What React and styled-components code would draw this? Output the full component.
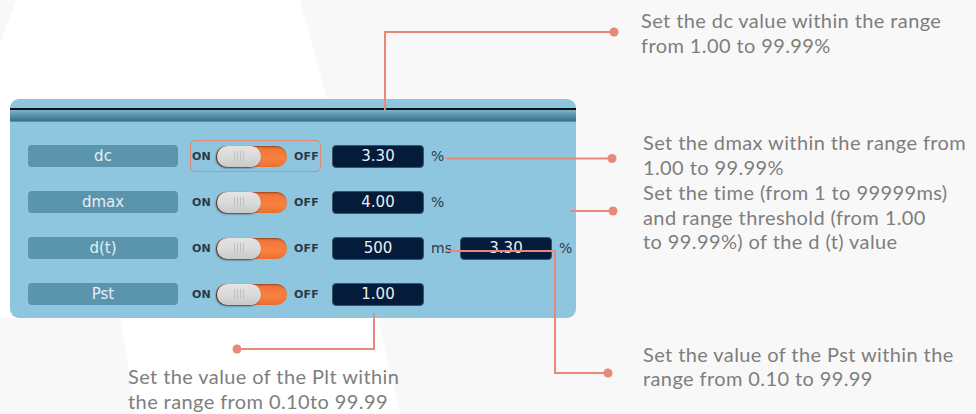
import React from 'react';
import styled, { createGlobalStyle } from 'styled-components';

const GlobalStyle = createGlobalStyle`
  html, body {
    margin: 0;
    padding: 0;
    background: #f8f8f8;
  }
  * {
    box-sizing: border-box;
  }
`;

const LINE = '#e8887a';

const Page = styled.div`
  position: relative;
  width: 976px;
  height: 414px;
  overflow: hidden;
  display: grid;
  grid-template-columns: 10px 566px 65px 1fr;
  font-family: 'DejaVu Sans', sans-serif;
`;

const Backdrop = styled.svg`
  position: absolute;
  inset: 0;
  z-index: 0;
`;

const Leaders = styled.svg`
  position: absolute;
  inset: 0;
  z-index: 5;
  pointer-events: none;
`;

const LeftColumn = styled.div`
  grid-column: 2;
  position: relative;
  z-index: 1;
  padding-top: 99px;
`;

const NotesColumn = styled.div`
  grid-column: 4;
  position: relative;
  z-index: 1;
  display: flex;
  flex-direction: column;
`;

const Note = styled.p`
  margin: ${({ top }) => `${top}px`} 0 0 ${({ left }) => `${left || 0}px`};
  font-family: Lato, 'Open Sans', sans-serif;
  font-size: 20px;
  font-weight: 400;
  letter-spacing: 0.4px;
  line-height: 24.5px;
  color: #7e7e7e;
  white-space: pre-line;
`;

const Panel = styled.div`
  width: 566px;
  height: 219px;
  background: #8dc6de;
  border-radius: 9px;
  padding-top: 9px;
  overflow: hidden;
`;

const HeaderRule = styled.div`
  height: 2px;
  background: #0b0f12;
`;

const HeaderBand = styled.div`
  height: 12px;
  background: linear-gradient(
    to bottom,
    #7db4ca 0%,
    #5f98b1 35%,
    #4a8199 70%,
    #3c7189 90%,
    #6ea9c1 100%
  );
`;

const Rows = styled.div`
  display: flex;
  flex-direction: column;
  gap: 14px;
  padding: 18px 0 0 18px;
`;

const Row = styled.div`
  display: flex;
  align-items: center;
  height: 32px;
`;

const Label = styled.div`
  width: 150px;
  height: 22px;
  border-radius: 4px;
  background: #5b95ad;
  color: #e4eff4;
  font-size: 15px;
  line-height: 22px;
  text-align: center;
  margin-right: 12px;
`;

const ToggleGroup = styled.div`
  display: flex;
  align-items: center;
  width: 131px;
  height: 32px;
  padding: 0 1px;
  border: 1.5px solid ${({ active }) => (active ? '#de8a6e' : 'transparent')};
  border-radius: 5px;
  margin-right: 11px;
`;

const SwitchText = styled.span`
  font-size: 11px;
  font-weight: bold;
  color: #2b3946;
  letter-spacing: 0.2px;
`;

const Track = styled.div`
  position: relative;
  width: 78px;
  height: 21px;
  margin: 0 7px 0 5px;
  border-radius: 11px;
  background: linear-gradient(to bottom, #f2713a 0%, #f7823d 60%, #ee6f33 100%);
  box-shadow: inset 1px 1px 2px rgba(60, 30, 10, 0.55);
`;

const Knob = styled.div`
  position: absolute;
  left: 1px;
  top: 0;
  width: 44px;
  height: 21px;
  border-radius: 11px;
  background: linear-gradient(to bottom, #e4e4e4 0%, #d9d9d9 55%, #c9c9c9 100%);
  box-shadow: -1px 1px 2px rgba(20, 25, 30, 0.75);
  display: flex;
  justify-content: center;
  align-items: center;
  gap: 2px;
`;

const Grip = styled.span`
  width: 1px;
  height: 10px;
  background: #bfbfbf;
`;

const ValueBox = styled.div`
  width: 92px;
  height: 23px;
  border-radius: 4px;
  background: #041c39;
  border: 1px solid #3c546a;
  color: #e9eef4;
  font-size: 15px;
  line-height: 21px;
  text-align: center;
  margin-right: 7px;
`;

const Unit = styled.span`
  font-size: 14px;
  color: #2d3b47;
  width: ${({ w }) => `${w}px`};
`;

const Switch = ({ active }) => (
  <ToggleGroup active={active}>
    <SwitchText>ON</SwitchText>
    <Track>
      <Knob>
        <Grip />
        <Grip />
        <Grip />
        <Grip />
      </Knob>
    </Track>
    <SwitchText>OFF</SwitchText>
  </ToggleGroup>
);

const rows = [
  { name: 'dc', value: '3.30', unit: '%', active: true },
  { name: 'dmax', value: '4.00', unit: '%' },
  { name: 'd(t)', value: '500', unit: 'ms', extra: '3.30' },
  { name: 'Pst', value: '1.00' },
];

const dots = [
  [614, 32],
  [612, 158.5],
  [613, 211],
  [608, 373],
  [237, 349],
];

export default function App() {
  return (
    <Page>
      <GlobalStyle />
      <Backdrop width="976" height="414">
        <polygon
          points="16,0 300,0 330,110 400,414 136,414 120,318 0,318 0,44"
          fill="#ffffff"
        />
      </Backdrop>

      <LeftColumn>
        <Panel>
          <HeaderRule />
          <HeaderBand />
          <Rows>
            {rows.map((r) => (
              <Row key={r.name}>
                <Label>{r.name}</Label>
                <Switch active={r.active} />
                <ValueBox>{r.value}</ValueBox>
                {r.unit && <Unit w={r.extra ? 29 : 12}>{r.unit}</Unit>}
                {r.extra && <ValueBox>{r.extra}</ValueBox>}
                {r.extra && <Unit w={12}>%</Unit>}
              </Row>
            ))}
          </Rows>
        </Panel>
        <Note top={46} left={118}>
          {'Set the value of the Plt within\nthe range from 0.10to 99.99'}
        </Note>
      </LeftColumn>

      <NotesColumn>
        <Note top={8}>{'Set the dc value within the range\nfrom 1.00 to 99.99%'}</Note>
        <Note top={73} left={2}>
          {'Set the dmax within the range from\n1.00 to 99.99%'}
        </Note>
        <Note top={1} left={2}>
          {'Set the time (from 1 to 99999ms)\nand range threshold (from 1.00\nto 99.99%) of the d (t) value'}
        </Note>
        <Note top={88} left={2}>
          {'Set the value of the Pst within the\nrange from 0.10 to 99.99'}
        </Note>
      </NotesColumn>

      <Leaders width="976" height="414">
        <g fill="none" stroke={LINE} strokeWidth="2">
          <polyline points="385,110 385,32 614,32" />
          <polyline points="446,158.5 612,158.5" />
          <polyline points="570,211 613,211" />
          <polyline points="448,251 555,251 555,373 608,373" />
          <polyline points="374,313 374,349 237,349" />
        </g>
        {dots.map(([x, y]) => (
          <circle key={`${x}-${y}`} cx={x} cy={y} r="4.5" fill={LINE} />
        ))}
      </Leaders>
    </Page>
  );
}
